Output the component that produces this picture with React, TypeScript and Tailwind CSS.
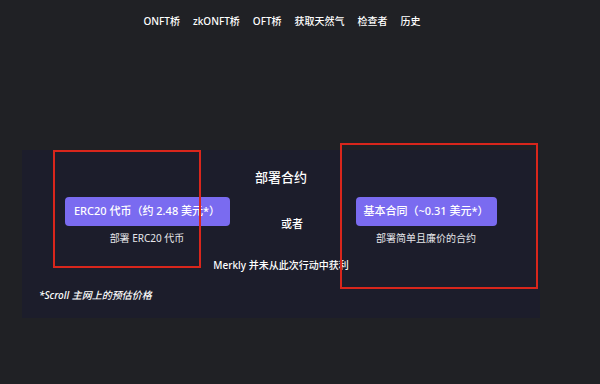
const navItems = ["ONFT桥", "zkONFT桥", "OFT桥", "获取天然气", "检查者", "历史"];

const font = { fontFamily: '"Noto Sans", "Noto Sans CJK SC", sans-serif' };

export default function App() {
  return (
    <div className="relative h-[384px] w-[600px] overflow-hidden bg-[#202125] text-white" style={font}>
      <nav className="flex h-[42px] items-center justify-center gap-[13px] pr-[36px] text-[10px] font-medium">
        {navItems.map((item) => (
          <span key={item}>{item}</span>
        ))}
      </nav>

      <div className="ml-[22px] mt-[108px] flex h-[168px] w-[518px] flex-col bg-[#1c1d2b] pt-[18px]">
        <div className="text-center text-[13px] font-medium leading-[18px]">部署合约</div>

        <div className="mt-[11px] grid grid-cols-[250px_40px_1fr] items-center">
          <div className="flex flex-col items-center">
            <button className="h-[29px] w-[165px] rounded-[4px] bg-[#7a6bf0] text-[11px] font-medium">
              ERC20 代币（约 2.48 美元*）
            </button>
            <span className="mt-[5px] text-[10px] leading-[14px] text-[#e6e6ea]">部署 ERC20 代币</span>
          </div>
          <div className="pt-[6px] text-center text-[11px] font-medium">或者</div>
          <div className="flex flex-col items-center">
            <button className="h-[29px] w-[141px] rounded-[4px] bg-[#7a6bf0] text-[11px] font-medium">
              基本合同（~0.31 美元*）
            </button>
            <span className="mt-[5px] text-[10px] leading-[14px] text-[#e6e6ea]">部署简单且廉价的合约</span>
          </div>
        </div>

        <div className="mt-[13px] text-center text-[10px] font-medium leading-[14px]">
          Merkly 并未从此次行动中获利
        </div>

        <div className="mt-[16px] pl-[17px] text-[10px] font-medium italic leading-[14px]">
          *Scroll 主网上的预估价格
        </div>
      </div>

      <div className="absolute left-[53px] top-[150px] h-[118px] w-[148px] border-2 border-[#d8261c]" />
      <div className="absolute left-[340px] top-[143px] h-[146px] w-[198px] border-2 border-[#d8261c]" />
    </div>
  );
}
